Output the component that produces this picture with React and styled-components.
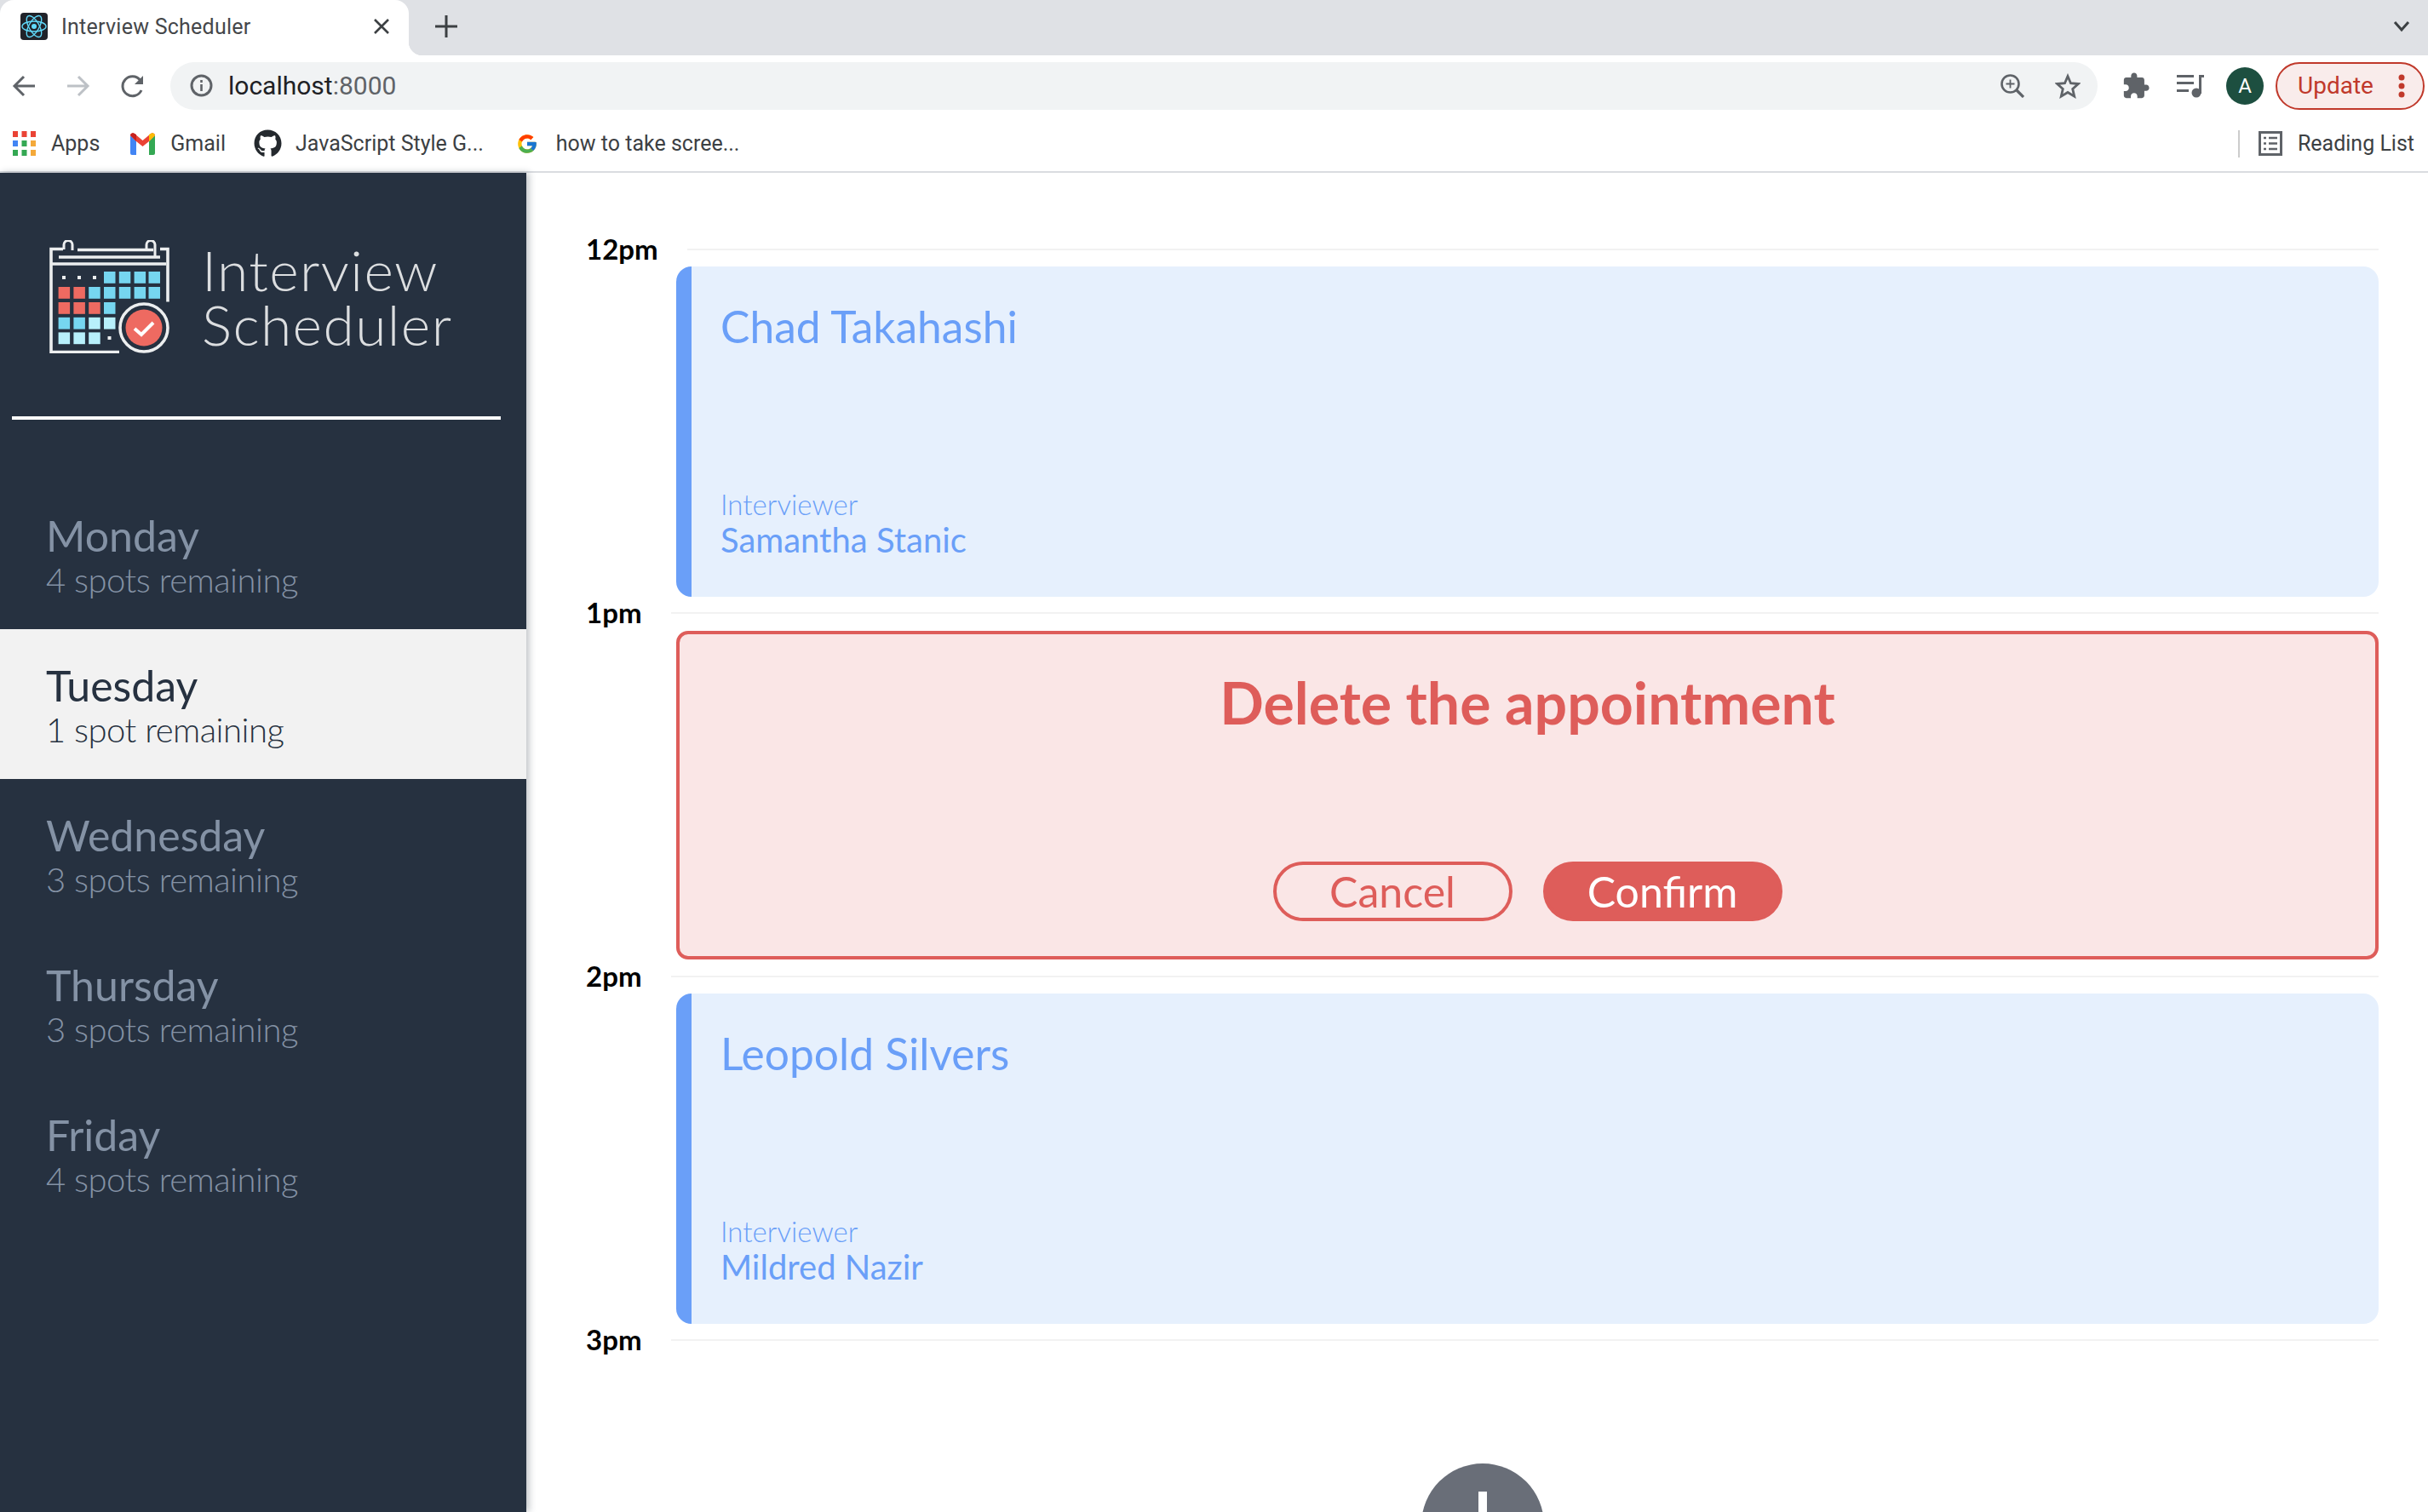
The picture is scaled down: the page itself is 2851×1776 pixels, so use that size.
import React from "react";
import styled, { createGlobalStyle } from "styled-components";
import { FaGithub } from "react-icons/fa";
import { FcGoogle } from "react-icons/fc";

const GlobalStyle = createGlobalStyle`
  html, body {
    margin: 0;
    height: 100%;
    overflow: hidden;
    background: #fff;
  }
  * { box-sizing: border-box; }
`;

const Page = styled.div`
  width: 2851px;
  height: 1776px;
  display: flex;
  flex-direction: column;
  overflow: hidden;
  font-family: Lato, "Noto Sans", sans-serif;
`;

/* browser chrome */
const TabStrip = styled.div`
  height: 65px;
  flex: none;
  background: #dfe1e5;
  display: flex;
  align-items: center;
  color: #3c4043;
  font-family: Roboto, sans-serif;
`;

const Tab = styled.div`
  position: relative;
  width: 480px;
  height: 65px;
  background: #fff;
  border-radius: 16px 16px 0 0;
  display: flex;
  align-items: center;
  padding: 0 22px 3px 24px;
  gap: 16px;
  font-size: 25px;
  letter-spacing: 0.25px;
  color: #45474a;

  &::after {
    content: "";
    position: absolute;
    right: -16px;
    bottom: 0;
    width: 16px;
    height: 16px;
    background: radial-gradient(circle at 100% 0, transparent 16px, #fff 16.5px);
  }
`;

const TabClose = styled.svg`
  margin-left: auto;
  width: 20px;
  height: 20px;
`;

const NewTab = styled.svg`
  width: 26px;
  height: 26px;
  margin: 0 0 3px 31px;
`;

const Chevron = styled.svg`
  width: 20px;
  height: 14px;
  margin: 0 21px 3px auto;
`;

const Toolbar = styled.div`
  height: 71px;
  flex: none;
  display: flex;
  align-items: center;
  gap: 8px;
  padding-right: 4px;
`;

const NavSlot = styled.div`
  width: 56px;
  height: 56px;
  flex: none;
  display: flex;
  align-items: center;
  justify-content: center;
`;

const AddressBar = styled.div`
  flex: 1;
  height: 56px;
  margin: 0 9px 0 8px;
  padding: 0 20px 0 23px;
  border-radius: 28px;
  background: #f1f3f4;
  display: flex;
  align-items: center;
  gap: 18px;
  font-family: Roboto, sans-serif;
  font-size: 30px;
  color: #202124;
`;

const Port = styled.span`
  color: #5f6368;
`;

const AddressActions = styled.div`
  margin-left: auto;
  display: flex;
  align-items: center;
  gap: 36px;
`;

const Avatar = styled.div`
  width: 44px;
  height: 44px;
  flex: none;
  margin-left: 6px;
  border-radius: 50%;
  background: #1d4f40;
  color: #fff;
  font-family: Roboto, sans-serif;
  font-size: 24px;
  display: flex;
  align-items: center;
  justify-content: center;
`;

const UpdatePill = styled.div`
  width: 175px;
  height: 56px;
  flex: none;
  margin-left: 6px;
  border: 2px solid #c0392b;
  border-radius: 28px;
  background: #f9eceb;
  color: #c0392b;
  font-family: Roboto, sans-serif;
  font-size: 28px;
  display: flex;
  align-items: center;
  justify-content: space-between;
  padding: 0 21px 0 24px;
`;

const BookmarkBar = styled.div`
  height: 67px;
  flex: none;
  border-bottom: 2px solid #dadce0;
  display: flex;
  align-items: center;
  padding: 0 16px 0 15px;
  gap: 36px;
  font-family: Roboto, sans-serif;
  font-size: 25px;
  color: #3c4043;
`;

const Bookmark = styled.div`
  display: flex;
  align-items: center;
  margin-left: ${(p) => p.$shift || 0}px;
  gap: ${(p) => p.$gap || 18}px;
  white-space: nowrap;
`;

const BookmarkDivider = styled.div`
  margin-left: auto;
  width: 2px;
  height: 32px;
  background: #ccc;
  margin-right: -14px;
`;

/* app */
const Body = styled.div`
  flex: 1;
  min-height: 0;
  display: flex;
`;

const Sidebar = styled.aside`
  width: 618px;
  flex: none;
  background: #263140;
  box-shadow: 3px 0 8px rgba(38, 49, 64, 0.3);
  position: relative;
  padding-top: 79px;
`;

const Brand = styled.div`
  display: flex;
  align-items: center;
  gap: 38px;
  padding-left: 58px;
  height: 133px;
`;

const BrandName = styled.div`
  font-weight: 300;
  font-size: 66px;
  line-height: 64px;
  letter-spacing: 1.4px;
  color: #dcdee0;
`;

const SidebarRule = styled.hr`
  margin: 74px 30px 70px 14px;
  border: 0;
  height: 4px;
  background: #fff;
`;

const DayItem = styled.div`
  height: 176px;
  padding: 36px 0 0 54px;
  background: ${(p) => (p.$selected ? "#f2f2f2" : "transparent")};
  color: ${(p) => (p.$selected ? "#263140" : "#8492a5")};
`;

const DayName = styled.div`
  font-size: 50px;
  line-height: 60px;
`;

const DaySpots = styled.div`
  font-size: 40px;
  line-height: 44px;
  font-weight: 300;
  letter-spacing: -0.5px;
`;

const Schedule = styled.main`
  flex: 1;
  padding: 89px 58px 0 70px;
`;

const Slot = styled.section`
  display: flex;
  flex-direction: column;
`;

const SlotHeader = styled.div`
  height: 2px;
  display: flex;
  align-items: center;
  gap: 34px;
`;

const SlotTime = styled.div`
  font-weight: 700;
  font-size: 33px;
  line-height: 40px;
  margin-top: -2px;
  color: #000;
`;

const SlotLine = styled.div`
  flex: 1;
  height: 2px;
  background: #f2f2f2;
`;

const Card = styled.article`
  height: 388px;
  margin: 19px 0 18px 106px;
  padding: 41px 34px 45px;
  background: #e6f0fd;
  border-left: 18px solid #6a9ff8;
  border-radius: 18px;
  color: #6a9ff8;
  display: flex;
  flex-direction: column;
  justify-content: space-between;
`;

const StudentName = styled.div`
  font-size: 51.5px;
  line-height: 58px;
`;

const InterviewerLabel = styled.div`
  font-size: 33px;
  line-height: 40px;
  font-weight: 300;
`;

const InterviewerName = styled.div`
  font-size: 40px;
  line-height: 44px;
`;

const ConfirmCard = styled.article`
  height: 386px;
  margin: 20px 0 19px 106px;
  padding: 42px 0 41px;
  background: #fae6e6;
  border: 4px solid #de5d5a;
  border-radius: 14px;
  color: #de5d5a;
  display: flex;
  flex-direction: column;
  align-items: center;
  justify-content: space-between;
`;

const ConfirmTitle = styled.h2`
  margin: 0;
  font-size: 68px;
  line-height: 76px;
  font-weight: 700;
`;

const ButtonRow = styled.div`
  display: flex;
  gap: 36px;
`;

const PillButton = styled.button`
  width: 281px;
  height: 70px;
  padding: 0;
  border: 4px solid #de5d5a;
  border-radius: 35px;
  background: ${(p) => (p.$filled ? "#de5d5a" : "transparent")};
  color: ${(p) => (p.$filled ? "#fff" : "#de5d5a")};
  font-family: inherit;
  font-size: 50px;
  line-height: 60px;
`;

const AddButton = styled.div`
  width: 144px;
  height: 144px;
  flex: none;
  align-self: center;
  margin-top: 144px;
  border-radius: 50%;
  background: #696e78;
  display: flex;
  align-items: center;
  justify-content: center;
`;

const days = [
  { name: "Monday", spots: "4 spots remaining" },
  { name: "Tuesday", spots: "1 spot remaining", selected: true },
  { name: "Wednesday", spots: "3 spots remaining" },
  { name: "Thursday", spots: "3 spots remaining" },
  { name: "Friday", spots: "4 spots remaining" },
];

const Favicon = () => (
  <svg width="32" height="32" viewBox="0 0 32 32" style={{ flex: "none" }}>
    <rect width="32" height="32" rx="4" fill="#20232a" />
    <g fill="none" stroke="#61dafb" strokeWidth="1.4">
      <ellipse cx="16" cy="16" rx="14" ry="6" />
      <ellipse cx="16" cy="16" rx="14" ry="6" transform="rotate(60 16 16)" />
      <ellipse cx="16" cy="16" rx="14" ry="6" transform="rotate(120 16 16)" />
    </g>
    <circle cx="16" cy="16" r="3" fill="#61dafb" />
  </svg>
);

const BackIcon = ({ color, flip }) => (
  <svg width="28" height="28" viewBox="0 0 28 28" fill="none" stroke={color} strokeWidth="3"
    style={flip ? { transform: "scaleX(-1)" } : undefined}>
    <path d="M27 14H3M14 3L3 14l11 11" />
  </svg>
);

const ReloadIcon = () => (
  <svg width="28" height="30" viewBox="0 0 28 30" fill="none">
    <path d="M24 20a11.5 11.5 0 1 1-1.5-12" stroke="#5f6368" strokeWidth="3" />
    <path d="M26 3v10H16z" fill="#5f6368" />
  </svg>
);

const InfoIcon = () => (
  <svg width="27" height="27" viewBox="0 0 27 27" fill="none">
    <circle cx="13.5" cy="13.5" r="11.5" stroke="#5f6368" strokeWidth="3" />
    <path d="M13.5 12v8M13.5 7v3" stroke="#5f6368" strokeWidth="2.6" />
  </svg>
);

const ZoomIcon = () => (
  <svg width="28" height="28" viewBox="0 0 28 28" fill="none" stroke="#5f6368" strokeWidth="2.6">
    <circle cx="11.5" cy="11.5" r="10" />
    <path d="M19 19l8 8" strokeWidth="3.2" />
    <path d="M11.5 6.5v10M6.5 11.5h10" strokeWidth="1.8" />
  </svg>
);

const StarIcon = () => (
  <svg width="30" height="30" viewBox="0 0 30 30" fill="none" stroke="#5f6368" strokeWidth="2.8" strokeLinejoin="miter">
    <path d="M15 3.5l3.5 8.2 8.9.8-6.7 5.9 2 8.7-7.700-4.600-7.700 4.600 2-8.700-6.700-5.900 8.900-.800z" />
  </svg>
);

const PuzzleIcon = () => (
  <svg width="34" height="34" viewBox="0 0 24 24" fill="#5f6368">
    <path d="M20.500 11H19V7c0-1.100-.900-2-2-2h-4V3.500C13 2.120 11.880 1 10.500 1S8 2.120 8 3.500V5H4c-1.100 0-1.990.900-1.990 2v3.800H3.500c1.490 0 2.700 1.210 2.700 2.700s-1.210 2.700-2.700 2.700H2V20c0 1.100.900 2 2 2h3.800v-1.500c0-1.490 1.210-2.700 2.700-2.700 1.490 0 2.700 1.210 2.700 2.700V22H17c1.100 0 2-.900 2-2v-4h1.500c1.380 0 2.500-1.120 2.500-2.500S21.880 11 20.500 11z" />
  </svg>
);

const MediaIcon = () => (
  <svg width="32" height="28" viewBox="0 0 32 28" fill="#5f6368">
    <rect x="0" y="1" width="20" height="3" />
    <rect x="0" y="9" width="20" height="3" />
    <rect x="0" y="18" width="14" height="3" />
    <rect x="26" y="1" width="3" height="22" />
    <rect x="26" y="1" width="6" height="3" />
    <circle cx="23" cy="22" r="5.500" />
  </svg>
);

const AppsIcon = () => (
  <svg width="27" height="29" viewBox="0 0 27 29" style={{ flex: "none" }}>
    {["#ea4335", "#ea4335", "#ea4335", "#4285f4", "#34a853", "#f4a93a", "#34a853", "#34a853", "#f4a93a"].map((fill, i) => (
      <rect key={i} x={(i % 3) * 10.5} y={Math.floor(i / 3) * 11} width="6" height="7" fill={fill} />
    ))}
  </svg>
);

const GmailIcon = () => (
  <svg width="29" height="26" viewBox="0 0 29 26" style={{ flex: "none" }}>
    <path d="M0 3v21a2 2 0 0 0 2 2h5V10z" fill="#4285f4" />
    <path d="M29 3v21a2 2 0 0 1-2 2h-5V10z" fill="#34a853" />
    <path d="M0 3a3 3 0 0 1 5-2l9.500 8L24 1a3 3 0 0 1 5 2l-7 7-7.500 6L7 10z" fill="#ea4335" />
    <path d="M22 10V2l2-1a3 3 0 0 1 5 2z" fill="#fbbc04" />
    <path d="M0 3a3 3 0 0 1 5-2l2 1v8z" fill="#c5221f" />
  </svg>
);

const ReadingListIcon = () => (
  <svg width="28" height="29" viewBox="0 0 28 29" fill="none" stroke="#5f6368" style={{ flex: "none" }}>
    <rect x="1.500" y="1.500" width="25" height="26" strokeWidth="3" />
    <path d="M6 8h3M12 8h10M6 14.500h3M12 14.500h10M6 21h3M12 21h10" strokeWidth="2.600" />
  </svg>
);

const LogoMark = () => {
  const cols = [10.6, 28.4, 46.200, 64, 81.800, 99.600, 116.500];
  const rows = [37, 55, 73, 90.800, 108.400];
  const blue = "#76d6f0";
  const red = "#ee6a61";
  const pale = "#b8f0fb";
  const cells = [
    [null, null, null, blue, blue, blue, blue],
    [red, red, blue, blue, blue, blue, blue],
    [red, red, red, blue],
    [blue, blue, pale, pale],
    [pale, pale, pale, null],
  ];
  const line = "#eceeef";
  return (
    <svg width="141" height="133" viewBox="0 0 141 133" style={{ flex: "none" }}>
      <g fill="none" stroke={line} strokeWidth="3.600">
        <path d="M16 10.500H2v121h80" />
        <path d="M2 28h135" />
        <path d="M130 10.500h9v62" />
        <path d="M33 11.500h89M11 20h119" />
        <path d="M17 11V5.500a5 5 0 0 1 10 0V12M114 11V5.500a5 5 0 0 1 10 0V20" strokeWidth="3" />
        <circle cx="111" cy="103" r="28" />
      </g>
      {cells.map((row, r) =>
        row.map((fill, c) =>
          fill ? <rect key={`${r}-${c}`} x={cols[c]} y={rows[r]} width="13.500" height="13.800" fill={fill} /> : null
        )
      )}
      {[[17, 44], [35, 44], [53, 44], [70.500, 115]].map(([x, y]) => (
        <rect key={x} x={x - 2} y={y - 2} width="4" height="4" fill={line} />
      ))}
      <circle cx="111" cy="103" r="21.500" fill={red} />
      <path d="M100 104l8 7 14-14" fill="none" stroke="#fff" strokeWidth="4" />
    </svg>
  );
};

const Appointment = ({ time, student, interviewer }) => (
  <Slot>
    <SlotHeader>
      <SlotTime>{time}</SlotTime>
      <SlotLine />
    </SlotHeader>
    <Card>
      <StudentName>{student}</StudentName>
      <div>
        <InterviewerLabel>Interviewer</InterviewerLabel>
        <InterviewerName>{interviewer}</InterviewerName>
      </div>
    </Card>
  </Slot>
);

export default function App() {
  return (
    <Page>
      <GlobalStyle />
      <TabStrip>
        <Tab>
          <Favicon />
          Interview Scheduler
          <TabClose viewBox="0 0 20 20" fill="none" stroke="#3c4043" strokeWidth="2.600">
            <path d="M2 2l16 16M18 2L2 18" />
          </TabClose>
        </Tab>
        <NewTab viewBox="0 0 26 26" fill="none" stroke="#3c4043" strokeWidth="3">
          <path d="M13 0v26M0 13h26" />
        </NewTab>
        <Chevron viewBox="0 0 20 14" fill="none" stroke="#3c4043" strokeWidth="3">
          <path d="M2 2l8 9 8-9" />
        </Chevron>
      </TabStrip>

      <Toolbar>
        <NavSlot><BackIcon color="#5f6368" /></NavSlot>
        <NavSlot><BackIcon color="#bdc1c6" flip /></NavSlot>
        <NavSlot><ReloadIcon /></NavSlot>
        <AddressBar>
          <InfoIcon />
          <span>localhost<Port>:8000</Port></span>
          <AddressActions>
            <ZoomIcon />
            <StarIcon />
          </AddressActions>
        </AddressBar>
        <NavSlot><PuzzleIcon /></NavSlot>
        <NavSlot><MediaIcon /></NavSlot>
        <Avatar>A</Avatar>
        <UpdatePill>
          Update
          <svg width="8" height="28" viewBox="0 0 8 28" fill="#c0392b">
            <circle cx="4" cy="4" r="3.500" />
            <circle cx="4" cy="14" r="3.500" />
            <circle cx="4" cy="24" r="3.500" />
          </svg>
        </UpdatePill>
      </Toolbar>

      <BookmarkBar>
        <Bookmark><AppsIcon />Apps</Bookmark>
        <Bookmark><GmailIcon />Gmail</Bookmark>
        <Bookmark $gap={16} $shift={-3}><FaGithub size={33} color="#24292e" />JavaScript Style G...</Bookmark>
        <Bookmark $gap={21} $shift={2}><FcGoogle size={26} />how to take scree...</Bookmark>
        <BookmarkDivider />
        <Bookmark><ReadingListIcon />Reading List</Bookmark>
      </BookmarkBar>

      <Body>
        <Sidebar>
          <Brand>
            <LogoMark />
            <BrandName>Interview<br />Scheduler</BrandName>
          </Brand>
          <SidebarRule />
          {days.map((day) => (
            <DayItem key={day.name} $selected={day.selected}>
              <DayName>{day.name}</DayName>
              <DaySpots>{day.spots}</DaySpots>
            </DayItem>
          ))}
        </Sidebar>

        <Schedule>
          <Appointment time="12pm" student="Chad Takahashi" interviewer="Samantha Stanic" />
          <Slot>
            <SlotHeader>
              <SlotTime>1pm</SlotTime>
              <SlotLine />
            </SlotHeader>
            <ConfirmCard>
              <ConfirmTitle>Delete the appointment</ConfirmTitle>
              <ButtonRow>
                <PillButton>Cancel</PillButton>
                <PillButton $filled>Confirm</PillButton>
              </ButtonRow>
            </ConfirmCard>
          </Slot>
          <Appointment time="2pm" student="Leopold Silvers" interviewer="Mildred Nazir" />
          <Slot>
            <SlotHeader>
              <SlotTime>3pm</SlotTime>
              <SlotLine />
            </SlotHeader>
            <AddButton>
              <svg width="60" height="78" viewBox="0 0 60 78" fill="#fff">
                <rect x="25" y="0" width="10" height="78" />
                <rect x="0" y="34" width="60" height="10" />
              </svg>
            </AddButton>
          </Slot>
        </Schedule>
      </Body>
    </Page>
  );
}
